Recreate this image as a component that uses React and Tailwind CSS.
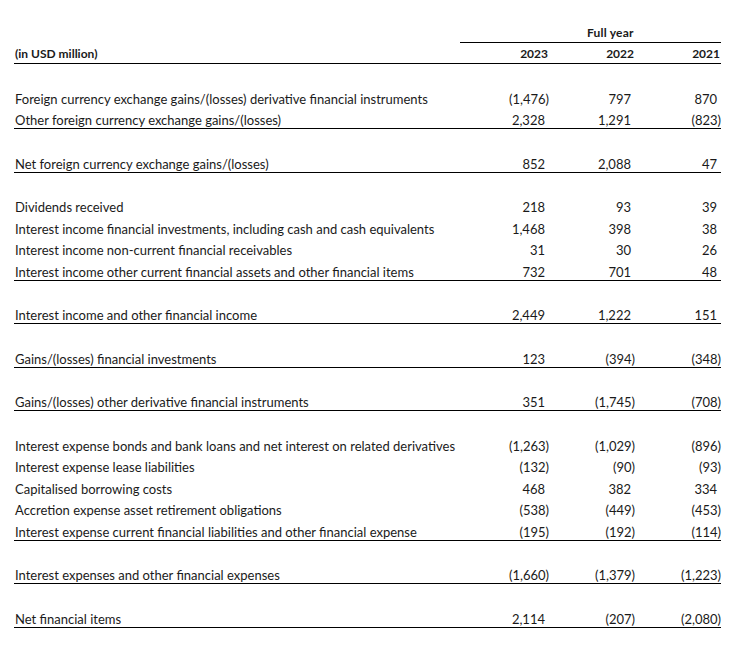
const groups = [
  [
    ["Foreign currency exchange gains/(losses) derivative financial instruments", "(1,476)", "797", "870"],
    ["Other foreign currency exchange gains/(losses)", "2,328", "1,291", "(823)"],
  ],
  [["Net foreign currency exchange gains/(losses)", "852", "2,088", "47"]],
  [
    ["Dividends received", "218", "93", "39"],
    ["Interest income financial investments, including cash and cash equivalents", "1,468", "398", "38"],
    ["Interest income non-current financial receivables", "31", "30", "26"],
    ["Interest income other current financial assets and other financial items", "732", "701", "48"],
  ],
  [["Interest income and other financial income", "2,449", "1,222", "151"]],
  [["Gains/(losses) financial investments", "123", "(394)", "(348)"]],
  [["Gains/(losses) other derivative financial instruments", "351", "(1,745)", "(708)"]],
  [
    ["Interest expense bonds and bank loans and net interest on related derivatives", "(1,263)", "(1,029)", "(896)"],
    ["Interest expense lease liabilities", "(132)", "(90)", "(93)"],
    ["Capitalised borrowing costs", "468", "382", "334"],
    ["Accretion expense asset retirement obligations", "(538)", "(449)", "(453)"],
    ["Interest expense current financial liabilities and other financial expense", "(195)", "(192)", "(114)"],
  ],
  [["Interest expenses and other financial expenses", "(1,660)", "(1,379)", "(1,223)"]],
  [["Net financial items", "2,114", "(207)", "(2,080)"]],
];

const Num = ({ value }) => {
  const neg = value.startsWith("(");
  return (
    <div className="w-[86px] text-right">
      <span className={neg ? "" : "pr-[4px]"}>{value}</span>
    </div>
  );
};

export default function App() {
  return (
    <div
      className="w-[744px] h-[666px] bg-white text-[#1a1a1a] pt-[22px]"
      style={{ fontFamily: "Lato, 'Noto Sans', sans-serif" }}
    >
      <div className="ml-[14px] w-[707px]">
        {/* header */}
        <div className="flex">
          <div className="w-[446px]" />
          <div className="flex-1 h-[21px] border-b border-black pl-[127px] flex items-center pt-[1px] text-[12px] font-bold tracking-[0.2px]">
            Full year
          </div>
        </div>
        <div className="flex items-center pt-[1px] h-[21px] border-b border-black text-[12px] font-bold">
          <div className="flex-1 pl-[1px]">(in USD million)</div>
          <div className="w-[87px] text-right">2023</div>
          <div className="w-[86px] text-right">2022</div>
          <div className="w-[87px] text-right pr-[1px]">2021</div>
        </div>

        {groups.map((rows, gi) => (
          <div key={gi} className="pt-[21px] border-b border-black text-[13px]">
            {rows.map((r, ri) => (
              <div key={ri} className="flex items-end h-[21.5px] pb-[1px] leading-none">
                <div className="flex-1 pl-[1px] whitespace-nowrap">{r[0]}</div>
                <Num value={r[1]} />
                <Num value={r[2]} />
                <Num value={r[3]} />
              </div>
            ))}
          </div>
        ))}
      </div>
    </div>
  );
}
